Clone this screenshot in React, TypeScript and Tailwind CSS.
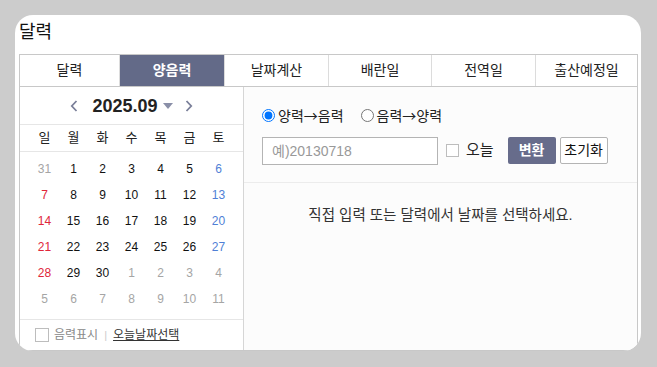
import React from 'react'

const tabs = ['달력', '양음력', '날짜계산', '배란일', '전역일', '출산예정일']
const weekdays = ['일', '월', '화', '수', '목', '금', '토']

type Day = { d: number; cur: boolean }

const buildDays = (): Day[] => {
  const list: Day[] = [{ d: 31, cur: false }]
  for (let i = 1; i <= 30; i++) list.push({ d: i, cur: true })
  for (let i = 1; i <= 11; i++) list.push({ d: i, cur: false })
  return list
}

function Chevron({ dir }: { dir: 'left' | 'right' }) {
  return (
    <svg width="8" height="12" viewBox="0 0 8 12" fill="none">
      <path
        d={dir === 'left' ? 'M6.5 1 L1.8 6 L6.5 11' : 'M1.5 1 L6.2 6 L1.5 11'}
        stroke="#7a7f99"
        strokeWidth="1.8"
      />
    </svg>
  )
}

function Calendar() {
  const days = buildDays()
  return (
    <div className="w-[224px] shrink-0 border-r border-[#d6d6d6] flex flex-col">
      <div className="h-[37px] flex items-center justify-center gap-[12px]">
        <Chevron dir="left" />
        <div className="flex items-center gap-[5px] ml-[2px]">
          <span className="text-[18px] font-bold text-[#222] leading-none">2025.09</span>
          <svg width="10" height="6" viewBox="0 0 10 6">
            <path d="M0 0 L10 0 L5 6 Z" fill="#8a8fa8" />
          </svg>
        </div>
        <Chevron dir="right" />
      </div>
      <div className="h-[28px] border-y border-[#e6e6e6] px-[10px] grid grid-cols-7 items-center">
        {weekdays.map((w) => (
          <div key={w} className="text-center text-[13px] text-[#222]">
            {w}
          </div>
        ))}
      </div>
      <div className="px-[10px] pt-[4px] pb-[5px] grid grid-cols-7">
        {days.map((x, i) => {
          const col = i % 7
          let color = 'text-[#111]'
          if (!x.cur) color = 'text-[#a5a5a5]'
          else if (col === 0) color = 'text-[#e0263a]'
          else if (col === 6) color = 'text-[#4f7fd6]'
          return (
            <div key={i} className={`h-[26px] flex items-center justify-center text-[12px] ${color}`}>
              {x.d}
            </div>
          )
        })}
      </div>
      <div className="mt-auto h-[31px] border-t border-[#e6e6e6] flex items-center pl-[15px] text-[12px]">
        <div className="w-[14px] h-[14px] border border-[#bdbdbd] bg-white" />
        <span className="ml-[5px] text-[#888]">음력표시</span>
        <span className="mx-[6px] text-[#ccc] text-[11px]">|</span>
        <span className="text-[#333] underline">오늘날짜선택</span>
      </div>
    </div>
  )
}

function Converter() {
  return (
    <div className="flex-1 bg-[#fcfcfc] flex flex-col">
      <div className="border-b border-[#ececec] pt-[20px] pb-[18px] pl-[18px]">
        <div
          className="h-[16px] flex items-center text-[14px] text-[#222]"
          style={{ fontFamily: '"Noto Sans CJK KR", sans-serif' }}
        >
          <label className="flex items-center">
            <input type="radio" name="mode" defaultChecked className="m-0 w-[13px] h-[13px] accent-[#0075ff]" />
            <span className="ml-[3px]">양력→음력</span>
          </label>
          <label className="flex items-center ml-[17px]">
            <input type="radio" name="mode" className="m-0 w-[13px] h-[13px]" />
            <span className="ml-[3px]">음력→양력</span>
          </label>
        </div>
        <div className="mt-[14px] h-[27px] flex items-center">
          <input
            placeholder="예)20130718"
            className="w-[176px] h-[28px] border border-[#b4b4b4] bg-white px-[9px] text-[14px] placeholder:text-[#999] outline-none"
          />
          <div className="ml-[8px] w-[13px] h-[13px] border border-[#bdbdbd] bg-white" />
          <span className="ml-[7px] text-[15px] text-[#222]">오늘</span>
          <button className="ml-[14px] w-[48px] h-[27px] rounded-[2px] bg-[#676c8b] text-white text-[14px] font-bold">
            변환
          </button>
          <button className="ml-[4px] w-[48px] h-[27px] rounded-[2px] border border-[#b4b4b4] bg-white text-[#111] text-[14px]">
            초기화
          </button>
        </div>
      </div>
      <div className="pt-[23px] text-center text-[14.5px] text-[#333] leading-[18px]">
        직접 입력 또는 달력에서 날짜를 선택하세요.
      </div>
    </div>
  )
}

export default function App() {
  return (
    <div
      className="w-[657px] h-[367px] bg-[#cccccc] pt-[15px] pl-[15px]"
      style={{ fontFamily: '"Liberation Sans", "Noto Sans CJK KR", sans-serif' }}
    >
      <div className="w-[626px] h-[336px] bg-white rounded-[18px] overflow-hidden pl-[4px] pr-[3px] flex flex-col">
        <div className="h-[39px] pt-[6px] text-[18px] text-[#111] leading-[22px]">달력</div>
        <div className="flex-1 border border-[#c8c8c8] flex flex-col">
          <div className="grid grid-cols-[99px_105px_104px_103px_104px_1fr] h-[32px] border-b border-[#c8c8c8]">
            {tabs.map((t, i) => (
              <div
                key={t}
                className={`flex items-center justify-center text-[14px] ${i > 0 ? 'border-l border-[#dcdcdc]' : ''} ${
                  i === 1 ? 'bg-[#636a88] text-white font-bold border-[#4d536e]' : 'text-[#222]'
                }`}
              >
                {t}
              </div>
            ))}
          </div>
          <div className="flex-1 flex">
            <Calendar />
            <Converter />
          </div>
        </div>
      </div>
    </div>
  )
}
